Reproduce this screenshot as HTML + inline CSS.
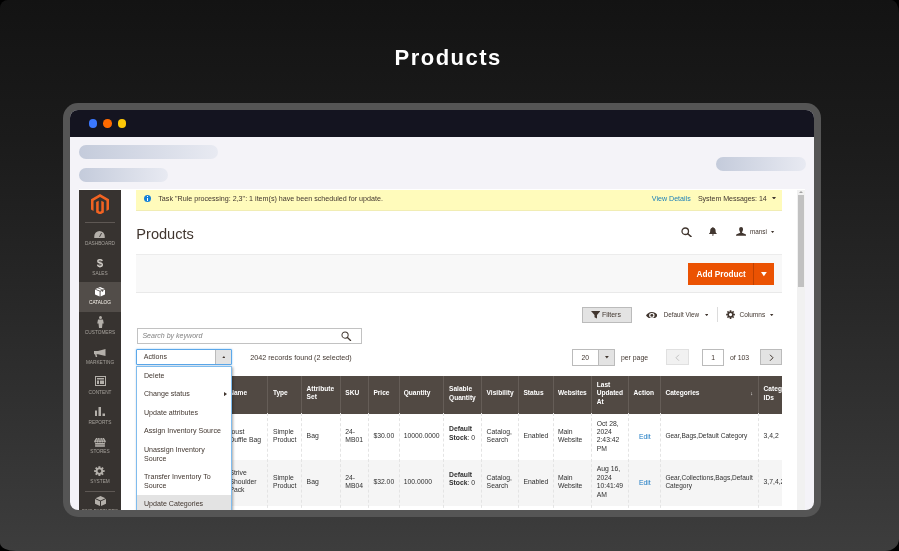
<!DOCTYPE html>
<html><head><meta charset="utf-8"><title>Products</title>
<style>
html,body{margin:0;padding:0;background:#000;}
body{width:899px;height:551px;overflow:hidden;font-family:"Liberation Sans",sans-serif;}
#root{will-change:transform;position:relative;width:899px;height:551px;overflow:hidden;border-radius:8px 8px 14px 16px / 8px 13px 12px 8px;
 background:linear-gradient(180deg,#131313 0%,#1b1b1b 25%,#252525 49%,#303030 72.6%,#3d3d3d 100%);}
.a{position:absolute;}
.t{position:absolute;white-space:nowrap;color:#41362f;font-size:7px;line-height:9px;}
#title{position:absolute;left:394.6px;top:43.3px;white-space:nowrap;color:#fff;font-weight:bold;font-size:22px;line-height:30px;letter-spacing:1.47px;}
#frame{position:absolute;left:63px;top:103px;width:758px;height:414px;background:#555555;border-radius:15px;}
#inner{position:absolute;left:70px;top:110px;width:744px;height:400px;border-radius:8px;overflow:hidden;background:#f4f3f8;}
#c{position:absolute;left:-70px;top:-110px;width:899px;height:551px;}
#bar{left:70px;top:110px;width:744px;height:27px;background:#141420;}
.dot{position:absolute;width:8.6px;height:8.6px;border-radius:50%;top:119.2px;}
.sk{position:absolute;border-radius:7px;background:linear-gradient(90deg,#c4cbdb,#e8eaf2);}
#shot{position:absolute;left:79px;top:189px;width:726px;height:321px;background:#fff;overflow:hidden;}
#s{position:absolute;left:-79px;top:-189px;width:899px;height:551px;}
#side{left:79px;top:190px;width:42px;height:330px;background:#373330;}
.lbl{position:absolute;left:79px;width:42px;text-align:center;color:#a5a19b;font-size:4.75px;line-height:6px;letter-spacing:0;white-space:nowrap;}
.th{position:absolute;white-space:nowrap;color:#fff;font-weight:bold;font-size:6.6px;line-height:8.6px;}
.td{position:absolute;white-space:nowrap;color:#303030;font-size:6.8px;line-height:8.4px;}
.vl{position:absolute;top:413px;height:100px;width:0;border-left:1px dashed #e4e4e4;}
.hl{position:absolute;top:376px;height:38px;width:1px;background:#655d57;}
.mi{position:absolute;left:144px;white-space:nowrap;color:#41362f;font-size:7.1px;line-height:9px;}
</style></head><body>
<div id="root">
 <div id="title">Products</div>
 <div id="frame"></div>
 <div id="inner"><div id="c">
  <div id="bar" class="a"></div>
  <div class="dot" style="left:88.5px;background:#3b78ff"></div>
  <div class="dot" style="left:103.2px;background:#ff6a00"></div>
  <div class="dot" style="left:117.9px;background:#ffc907"></div>
  <div class="sk" style="left:79px;top:145px;width:139px;height:14px"></div>
  <div class="sk" style="left:79px;top:168px;width:89px;height:14px"></div>
  <div class="sk" style="left:716px;top:157px;width:90px;height:13.5px"></div>

  <div id="shot"><div id="s">
   <!-- sidebar -->
   <div id="side" class="a"></div>
   <div class="a" style="left:79px;top:282px;width:42px;height:30px;background:#524d49"></div>
   <div class="a" style="left:85px;top:222px;width:30px;height:1px;background:#5e5854"></div>
   <div class="a" style="left:85px;top:490.5px;width:30px;height:1px;background:#5e5854"></div>
   <!-- logo -->
   <svg class="a" style="left:90.8px;top:194.3px" width="18" height="19.8" preserveAspectRatio="none" viewBox="0 0 36 40"><path fill="#f26322" d="M18 0 0 10.4v20.8l5.1 3V13.4L18 5.9l12.9 7.5v20.8l5.1-3V10.4zM20.6 34.2 18 35.7l-2.6-1.5V13.4l-5.1 3v20.8L18 41.6l7.7-4.4V16.4l-5.1-3z"/></svg>
   <div class="lbl" style="top:240.5px">DASHBOARD</div>
   <div class="lbl" style="top:271.2px">SALES</div>
   <div class="lbl" style="top:300.4px;color:#f7f3eb">CATALOG</div>
   <div class="lbl" style="top:329.5px">CUSTOMERS</div>
   <div class="lbl" style="top:360.2px">MARKETING</div>
   <div class="lbl" style="top:390.2px">CONTENT</div>
   <div class="lbl" style="top:420px">REPORTS</div>
   <div class="lbl" style="top:449.3px">STORES</div>
   <div class="lbl" style="top:479.3px">SYSTEM</div>
   <div class="lbl" style="top:508.7px;font-size:4.5px">FIND PARTNERS</div>
   <!-- icons -->
   <svg class="a" style="left:94px;top:230.8px" width="11" height="7.3" viewBox="0 0 23 16"><path fill="#b4b0aa" d="M11.5 0A11.5 11.5 0 0 0 0 11.5V16h23v-4.5A11.5 11.5 0 0 0 11.5 0z"/><path stroke="#373330" stroke-width="2" d="M11.5 13 16 4.5"/></svg>
   <div class="a" style="left:79px;width:42px;text-align:center;top:256.5px;font-size:11.5px;line-height:13px;font-weight:bold;color:#cfcbc5">$</div>
   <svg class="a" style="left:95.2px;top:287.4px" width="10.2" height="9.4" viewBox="0 0 22 20" preserveAspectRatio="none"><path fill="#fff" d="M11 0 1 4l10 4 10-4zM0 5.5V16l10 4V9.5zM22 5.5 12 9.5V20l10-4z"/><path fill="#524d49" d="M5 2.3 15.5 6.5v4l2-.8v-4L7 1.5z"/></svg>
   <svg class="a" style="left:96.5px;top:315.5px" width="7" height="12" viewBox="0 0 14 24"><circle cx="7" cy="3" r="3" fill="#b4b0aa"/><path fill="#b4b0aa" d="M2 7h10l1.5 8H11l-1 9H4l-1-9H.5z"/></svg>
   <svg class="a" style="left:94px;top:349px" width="11.5" height="8" viewBox="0 0 23 16"><path fill="#b4b0aa" d="M23 0v14L8 10.5H5l1.5 5.5h-3L2 10.5H0V4h8zM0 4"/></svg>
   <svg class="a" style="left:94.5px;top:376.2px" width="11" height="10.2" viewBox="0 0 22 20"><path fill="#b4b0aa" d="M0 0h22v20H0zM2 2v16h18V2z"/><path fill="#b4b0aa" d="M4 4h14v3H4zM4 9h4v7H4zM10 9h8v7h-8z"/></svg>
   <svg class="a" style="left:95px;top:406.5px" width="10" height="9.5" viewBox="0 0 20 19"><path fill="#b4b0aa" d="M0 7h4v12H0zM7 0h5v19H7zM15 13h5v6h-5z"/></svg>
   <svg class="a" style="left:94px;top:437.8px" width="12" height="8.8" viewBox="0 0 24 18"><path fill="#b4b0aa" d="M4 0h16l4 6.5c0 1.6-1.3 2.5-2.4 2.5S19.2 8 19.2 6.5c0 1.5-1.2 2.5-2.4 2.5s-2.4-1-2.4-2.5c0 1.5-1.2 2.5-2.4 2.5S9.6 8 9.6 6.5C9.6 8 8.4 9 7.2 9S4.8 8 4.8 6.5C4.8 8 3.6 9 2.4 9S0 8 0 6.5zM2 10.3h20V18H2z"/><path stroke="#373330" stroke-width="1.1" d="M7.3 0 4.8 6.5M10.8 0 9.6 6.5M13.2 0l1.2 6.5M16.7 0l2.5 6.5M2 14h20"/></svg>
   <svg class="a" style="left:94.3px;top:466.3px" width="10.8" height="10.2" viewBox="0 0 24 24" preserveAspectRatio="none"><path fill="#b4b0aa" fill-rule="evenodd" d="M9.91 3.66 L9.70 0.43 L14.30 0.43 L14.09 3.66 L16.42 4.62 L18.56 2.19 L21.81 5.44 L19.38 7.58 L20.34 9.91 L23.57 9.70 L23.57 14.30 L20.34 14.09 L19.38 16.42 L21.81 18.56 L18.56 21.81 L16.42 19.38 L14.09 20.34 L14.30 23.57 L9.70 23.57 L9.91 20.34 L7.58 19.38 L5.44 21.81 L2.19 18.56 L4.62 16.42 L3.66 14.09 L0.43 14.30 L0.43 9.70 L3.66 9.91 L4.62 7.58 L2.19 5.44 L5.44 2.19 L7.58 4.62Z M7.80 12.00a4.2 4.2 0 1 0 8.4 0a4.2 4.2 0 1 0 -8.4 0Z"/></svg>
   <svg class="a" style="left:95px;top:496px" width="11" height="10" viewBox="0 0 22 20"><path fill="#b4b0aa" d="M11 0 1 4.5l10 4.5 10-4.5zM0 6v9.5l10 4.5V10.5zM22 6l-10 4.5V20l10-4.5z"/></svg>

   <!-- message bar -->
   <div class="a" style="left:136.3px;top:190px;width:645.5px;height:19.8px;background:#fffbbb;border-bottom:1px solid #f1edb4"></div>
   <div class="a" style="left:143.7px;top:194.6px;width:7.7px;height:7.7px;border-radius:50%;background:#1480d8"></div>
   <div class="a" style="left:147px;top:196.1px;width:1.2px;height:1.2px;background:#fff"></div>
   <div class="a" style="left:147px;top:198px;width:1.2px;height:3px;background:#fff"></div>
   <div class="t" id="m1" style="left:158.3px;top:194.6px;font-size:7.15px">Task "Rule processing: 2,3": 1 item(s) have been scheduled for update.</div>
   <div class="t" id="m2" style="left:651.8px;top:194.6px;color:#1a7fb8;font-size:7.1px">View Details</div>
   <div class="t" id="m3" style="left:697.9px;top:194.6px;font-size:7.1px;letter-spacing:-0.05px">System Messages: 14</div>
   <svg class="a" style="left:772.2px;top:196.9px" width="4" height="2.6" viewBox="0 0 4 2.6"><path fill="#41362f" d="M0 0h4L2 2.6z"/></svg>

   <!-- page header -->
   <div class="t" id="h1" style="left:136.3px;top:224px;font-size:14.6px;line-height:20px;">Products</div>
   <svg class="a" style="left:681.2px;top:226.7px" width="11" height="10" viewBox="0 0 22 20"><circle cx="8.5" cy="8.5" r="6.5" fill="none" stroke="#41362f" stroke-width="2.6"/><path stroke="#41362f" stroke-width="3.2" stroke-linecap="round" d="M13.5 13.5 20 19"/></svg>
   <svg class="a" style="left:709px;top:227.4px" width="7.8" height="8.8" viewBox="0 0 16 18"><path fill="#41362f" d="M8 0c.8 0 1.3.6 1.3 1.4 2.7.6 4.2 3 4.2 5.6 0 4 1 5.5 2.5 6.5v1H0v-1c1.5-1 2.5-2.5 2.5-6.5 0-2.6 1.5-5 4.2-5.6C6.7.6 7.2 0 8 0zM6 15.5h4c0 1.3-.9 2.5-2 2.5s-2-1.2-2-2.5z"/></svg>
   <svg class="a" style="left:735.6px;top:227.1px" width="10.2" height="8.7" viewBox="0 0 21 18"><path fill="#41362f" d="M10.5 0c2.5 0 4 1.8 4 4.5S13 10 12.5 10.5V12l6 2.5c1.5.6 2.5 1.5 2.5 3.5H0c0-2 1-2.9 2.5-3.5l6-2.5v-1.5C8 10 6.5 7.2 6.5 4.5S8 0 10.5 0z"/></svg>
   <div class="t" id="u1" style="left:750px;top:227.2px;font-size:6.35px">mansi</div>
   <svg class="a" style="left:771.4px;top:231.0px" width="3.2" height="2.1" viewBox="0 0 3.2 2.1"><path fill="#41362f" d="M0 0h3.2L1.6 2.1z"/></svg>

   <!-- actions bar -->
   <div class="a" style="left:136.3px;top:254px;width:645.5px;height:37px;background:#f8f8f8;border-top:1px solid #ececec;border-bottom:1px solid #e9e9e9"></div>
   <div class="a" style="left:688.3px;top:262.8px;width:86px;height:21.8px;background:#eb5202"></div>
   <div class="a" style="left:753.3px;top:262.8px;width:0.7px;height:21.8px;background:#c04100"></div>
   <div class="t" id="ap" style="left:696.6px;top:269.6px;color:#fff;font-weight:bold;font-size:8.3px;letter-spacing:-.06px">Add Product</div>
   <svg class="a" style="left:761.3px;top:272.3px" width="5.8" height="4.3" viewBox="0 0 5.8 3.9" preserveAspectRatio="none"><path fill="#fff" d="M0 0h5.8L2.9 3.9z"/></svg>

   <!-- filter row -->
   <div class="a" style="left:582px;top:307px;width:47.5px;height:13.6px;background:#e3e3e3;border:1px solid #bbbbbb"></div>
   <svg class="a" style="left:590.7px;top:311px" width="9.5" height="7.5" viewBox="0 0 19 15"><path fill="#41362f" d="M0 0h19l-7 8v7l-5-2.5V8z"/></svg>
   <div class="t" id="f1" style="left:601.9px;top:310px;font-size:7px">Filters</div>
   <svg class="a" style="left:645.7px;top:311.6px" width="11.7" height="6.8" viewBox="0 0 24 16" preserveAspectRatio="none"><path fill="#41362f" d="M12 0C6 0 2 4.5 0 8c2 3.5 6 8 12 8s10-4.5 12-8c-2-3.5-6-8-12-8zm0 13.5A5.5 5.5 0 1 1 12 2.5a5.5 5.5 0 0 1 0 11z"/><circle cx="12" cy="8" r="3" fill="#41362f"/></svg>
   <div class="t" id="f2" style="left:663.8px;top:310px;font-size:6.3px">Default View</div>
   <svg class="a" style="left:705.1px;top:314.2px" width="3.4" height="2.2" viewBox="0 0 3.4 2.2"><path fill="#41362f" d="M0 0h3.4L1.7 2.2z"/></svg>
   <div class="a" style="left:717px;top:307.3px;width:1px;height:15px;background:#dcdcdc"></div>
   <svg class="a" style="left:725.8px;top:310.2px" width="9.1" height="9.1" viewBox="0 0 24 24"><path fill="#41362f" fill-rule="evenodd" d="M9.91 3.66 L9.70 0.43 L14.30 0.43 L14.09 3.66 L16.42 4.62 L18.56 2.19 L21.81 5.44 L19.38 7.58 L20.34 9.91 L23.57 9.70 L23.57 14.30 L20.34 14.09 L19.38 16.42 L21.81 18.56 L18.56 21.81 L16.42 19.38 L14.09 20.34 L14.30 23.57 L9.70 23.57 L9.91 20.34 L7.58 19.38 L5.44 21.81 L2.19 18.56 L4.62 16.42 L3.66 14.09 L0.43 14.30 L0.43 9.70 L3.66 9.91 L4.62 7.58 L2.19 5.44 L5.44 2.19 L7.58 4.62Z M7.80 12.00a4.2 4.2 0 1 0 8.4 0a4.2 4.2 0 1 0 -8.4 0Z"/></svg>
   <div class="t" id="f3" style="left:739.5px;top:310px;font-size:6.5px">Columns</div>
   <svg class="a" style="left:770.3px;top:314.2px" width="3.4" height="2.2" viewBox="0 0 3.4 2.2"><path fill="#41362f" d="M0 0h3.4L1.7 2.2z"/></svg>

   <!-- search -->
   <div class="a" style="left:136.6px;top:328px;width:223.6px;height:13.7px;background:#fff;border:1px solid #c2c2c2"></div>
   <div class="t" id="s1" style="left:142.4px;top:331.3px;font-style:italic;color:#808080;font-size:7.05px">Search by keyword</div>
   <svg class="a" style="left:341px;top:330.5px" width="10.5" height="10.5" viewBox="0 0 22 22"><circle cx="8.5" cy="8.5" r="6.5" fill="none" stroke="#41362f" stroke-width="2.1"/><path stroke="#41362f" stroke-width="2.7" stroke-linecap="round" d="M13.5 13.5 20 20"/></svg>

   <!-- pagination -->
   <div class="a" style="left:572px;top:349px;width:40.7px;height:14.7px;background:#fff;border:1px solid #bbbbbb"></div>
   <div class="a" style="left:598.2px;top:350px;width:14.5px;height:14.7px;background:#e3e3e3;border-left:1px solid #bbbbbb"></div>
   <svg class="a" style="left:605.4px;top:356.3px" width="3.8" height="2.4" viewBox="0 0 3.8 2.4"><path fill="#41362f" d="M0 0h3.8L1.9 2.4z"/></svg>
   <div class="t" id="p1" style="left:581.4px;top:353px;font-size:6.8px">20</div>
   <div class="t" id="p2" style="left:620.9px;top:353px;font-size:6.9px">per page</div>
   <div class="a" style="left:666.2px;top:349.2px;width:20.5px;height:14px;background:#f1f1f1;border:1px solid #e0e0e0"></div>
   <svg class="a" style="left:674.5px;top:353.5px" width="5" height="7.5" viewBox="0 0 10 15"><path fill="none" stroke="#c2c2c2" stroke-width="2" d="M8 1.5 2 7.5l6 6"/></svg>
   <div class="a" style="left:702.3px;top:349px;width:19.3px;height:14.7px;background:#fff;border:1px solid #bbbbbb"></div>
   <div class="t" id="p3" style="left:711.3px;top:353px;font-size:6.8px">1</div>
   <div class="t" id="p4" style="left:730px;top:353px;font-size:6.9px">of 103</div>
   <div class="a" style="left:759.7px;top:349.2px;width:19.9px;height:14px;background:#e3e3e3;border:1px solid #bbbbbb"></div>
   <svg class="a" style="left:768.5px;top:353.5px" width="5" height="7.5" viewBox="0 0 10 15"><path fill="none" stroke="#41362f" stroke-width="2" d="M2 1.5 8 7.5l-6 6"/></svg>

   <div class="t" id="r1" style="left:250.2px;top:353px;font-size:7.2px">2042 records found (2 selected)</div>

   <!-- table -->
   <div class="a" style="left:136.6px;top:375.6px;width:645.6px;height:38px;background:#514943"></div>
   <div class="a" style="left:136.6px;top:459.5px;width:645.6px;height:46px;background:#f5f5f5"></div>
   <div class="hl" style="left:266.8px"></div>
   <div class="vl" style="left:266.8px"></div>
   <div class="hl" style="left:301.1px"></div>
   <div class="vl" style="left:301.1px"></div>
   <div class="hl" style="left:340.0px"></div>
   <div class="vl" style="left:340.0px"></div>
   <div class="hl" style="left:367.7px"></div>
   <div class="vl" style="left:367.7px"></div>
   <div class="hl" style="left:398.5px"></div>
   <div class="vl" style="left:398.5px"></div>
   <div class="hl" style="left:443.2px"></div>
   <div class="vl" style="left:443.2px"></div>
   <div class="hl" style="left:480.8px"></div>
   <div class="vl" style="left:480.8px"></div>
   <div class="hl" style="left:517.9px"></div>
   <div class="vl" style="left:517.9px"></div>
   <div class="hl" style="left:552.7px"></div>
   <div class="vl" style="left:552.7px"></div>
   <div class="hl" style="left:591.0px"></div>
   <div class="vl" style="left:591.0px"></div>
   <div class="hl" style="left:628.0px"></div>
   <div class="vl" style="left:628.0px"></div>
   <div class="hl" style="left:659.5px"></div>
   <div class="vl" style="left:659.5px"></div>
   <div class="hl" style="left:758.0px"></div>
   <div class="vl" style="left:758.0px"></div>
   <div class="th" style="left:229.2px;top:388.7px">Name</div>
   <div class="th" style="left:272.9px;top:388.7px">Type</div>
   <div class="th" style="left:306.6px;top:385.0px">Attribute</div>
   <div class="th" style="left:306.6px;top:392.9px">Set</div>
   <div class="th" style="left:345.3px;top:388.7px">SKU</div>
   <div class="th" style="left:373.4px;top:388.7px">Price</div>
   <div class="th" style="left:403.7px;top:388.7px">Quantity</div>
   <div class="th" style="left:449px;top:385.0px">Salable</div>
   <div class="th" style="left:449px;top:393.6px">Quantity</div>
   <div class="th" style="left:486.6px;top:388.7px">Visibility</div>
   <div class="th" style="left:523.4px;top:388.7px">Status</div>
   <div class="th" style="left:557.9px;top:388.7px">Websites</div>
   <div class="th" style="left:596.7px;top:380.5px">Last</div>
   <div class="th" style="left:596.7px;top:389.0px">Updated</div>
   <div class="th" style="left:596.7px;top:397.5px">At</div>
   <div class="th" style="left:633.6px;top:388.7px">Action</div>
   <div class="th" style="left:665.4px;top:388.7px">Categories</div>
   <div class="th" style="left:763.6px;top:385.0px">Category</div>
   <div class="th" style="left:763.6px;top:393.5px">IDs</div>
   <div class="th" style="left:750.2px;top:389.3px;font-size:5.5px;font-weight:normal;color:#f4f2f0">&#8595;</div>
   <div class="td" style="left:228.2px;top:427.5px;">Joust</div>
   <div class="td" style="left:229.4px;top:435.7px;">Duffle Bag</div>
   <div class="td" style="left:272.9px;top:427.5px;">Simple</div>
   <div class="td" style="left:272.9px;top:435.7px;">Product</div>
   <div class="td" style="left:306.6px;top:432.4px;">Bag</div>
   <div class="td" style="left:345.3px;top:427.6px;">24-</div>
   <div class="td" style="left:345.3px;top:435.8px;">MB01</div>
   <div class="td" style="left:373.4px;top:432.4px;">$30.00</div>
   <div class="td" style="left:403.7px;top:432.4px;">10000.0000</div>
   <div class="td" style="left:449px;top:424.9px;"><b>Default</b></div>
   <div class="td" style="left:449px;top:433.5px;"><b>Stock</b>: 0</div>
   <div class="td" style="left:486.6px;top:427.6px;">Catalog,</div>
   <div class="td" style="left:486.6px;top:435.8px;">Search</div>
   <div class="td" style="left:523.4px;top:432.4px;">Enabled</div>
   <div class="td" style="left:557.9px;top:427.5px;">Main</div>
   <div class="td" style="left:557.9px;top:435.8px;">Website</div>
   <div class="td" style="left:596.7px;top:419.7px;">Oct 28,</div>
   <div class="td" style="left:596.7px;top:428.1px;">2024</div>
   <div class="td" style="left:596.7px;top:436.4px;">2:43:42</div>
   <div class="td" style="left:596.7px;top:444.7px;">PM</div>
   <div class="td" style="left:639px;top:432.6px;color:#1979c3">Edit</div>
   <div class="td" style="left:665.4px;top:432.4px;font-size:6.55px">Gear,Bags,Default Category</div>
   <div class="td" style="left:763.6px;top:432.4px;">3,4,2</div>
   <div class="td" style="left:229.4px;top:469.2px;">Strive</div>
   <div class="td" style="left:229.4px;top:477.6px;">Shoulder</div>
   <div class="td" style="left:229.4px;top:486.0px;">Pack</div>
   <div class="td" style="left:272.9px;top:473.6px;">Simple</div>
   <div class="td" style="left:272.9px;top:481.9px;">Product</div>
   <div class="td" style="left:306.6px;top:478.1px;">Bag</div>
   <div class="td" style="left:345.3px;top:474.0px;">24-</div>
   <div class="td" style="left:345.3px;top:482.2px;">MB04</div>
   <div class="td" style="left:373.4px;top:478.1px;">$32.00</div>
   <div class="td" style="left:403.7px;top:478.1px;">100.0000</div>
   <div class="td" style="left:449px;top:470.6px;"><b>Default</b></div>
   <div class="td" style="left:449px;top:479.2px;"><b>Stock</b>: 0</div>
   <div class="td" style="left:486.6px;top:474.0px;">Catalog,</div>
   <div class="td" style="left:486.6px;top:482.2px;">Search</div>
   <div class="td" style="left:523.4px;top:478.1px;">Enabled</div>
   <div class="td" style="left:557.9px;top:473.8px;">Main</div>
   <div class="td" style="left:557.9px;top:482.2px;">Website</div>
   <div class="td" style="left:596.7px;top:465.4px;">Aug 16,</div>
   <div class="td" style="left:596.7px;top:473.8px;">2024</div>
   <div class="td" style="left:596.7px;top:482.2px;">10:41:49</div>
   <div class="td" style="left:596.7px;top:490.5px;">AM</div>
   <div class="td" style="left:639px;top:478.6px;color:#1979c3">Edit</div>
   <div class="td" style="left:665.4px;top:473.8px;font-size:6.55px">Gear,Collections,Bags,Default</div>
   <div class="td" style="left:665.4px;top:482.2px;font-size:6.55px">Category</div>
   <div class="td" style="left:763.6px;top:478.3px;">3,7,4,2</div>
   <div class="a" style="left:782.2px;top:370px;width:15px;height:145px;background:#fff"></div>
   <div class="a" style="left:136px;top:349px;width:94px;height:14px;background:#fff;border:1px solid #5ba8ea;border-radius:1px;box-shadow:0 0 2px rgba(0,123,219,.45)"></div>
   <div class="a" style="left:215px;top:350px;width:15px;height:14px;background:#e3e3e3;border-left:1px solid #bbbbbb"></div>
   <svg class="a" style="left:221.7px;top:355.8px" width="3.8" height="2.4" viewBox="0 0 3.8 2.4"><path fill="#41362f" d="M0 2.4h3.8L1.9 0z"/></svg>
   <div class="t" id="a1" style="left:143.8px;top:352px;font-size:7.05px">Actions</div>
   <div class="a" style="left:136px;top:365.6px;width:94px;height:150px;background:#fff;border:1px solid #7fbcee;box-shadow:0.5px 0.5px 2.5px rgba(0,0,0,.35)"></div>
   <div class="a" style="left:137px;top:495px;width:94px;height:20px;background:#e3e3e3"></div>
   <div class="mi" id="d0" style="top:371.9px">Delete</div>
   <div class="mi" id="d1" style="top:390.2px">Change status</div>
   <div class="mi" id="d2" style="top:409.0px">Update attributes</div>
   <div class="mi" id="d3" style="top:426.7px">Assign Inventory Source</div>
   <div class="mi" id="d4" style="top:445.9px">Unassign Inventory</div>
   <div class="mi" id="d5" style="top:454.9px">Source</div>
   <div class="mi" id="d6" style="top:472.6px">Transfer Inventory To</div>
   <div class="mi" id="d7" style="top:481.6px">Source</div>
   <div class="mi" id="d8" style="top:500.4px">Update Categories</div>
   <svg class="a" style="left:224.2px;top:391.5px" width="3" height="4.2" viewBox="0 0 3 4.2"><path fill="#41362f" d="M0 0v4.2L3 2.1z"/></svg>
   <div class="a" style="left:797px;top:190px;width:8px;height:330px;background:#f1f1f1"></div>
   <div class="a" style="left:798.4px;top:195px;width:5.2px;height:92.3px;background:#c1c1c1"></div>
   <div class="a" style="left:799px;top:190.8px;border-left:2px solid transparent;border-right:2px solid transparent;border-bottom:2px solid #a3a3a3"></div>
  </div></div>
 </div></div>
</div>
</body></html>
